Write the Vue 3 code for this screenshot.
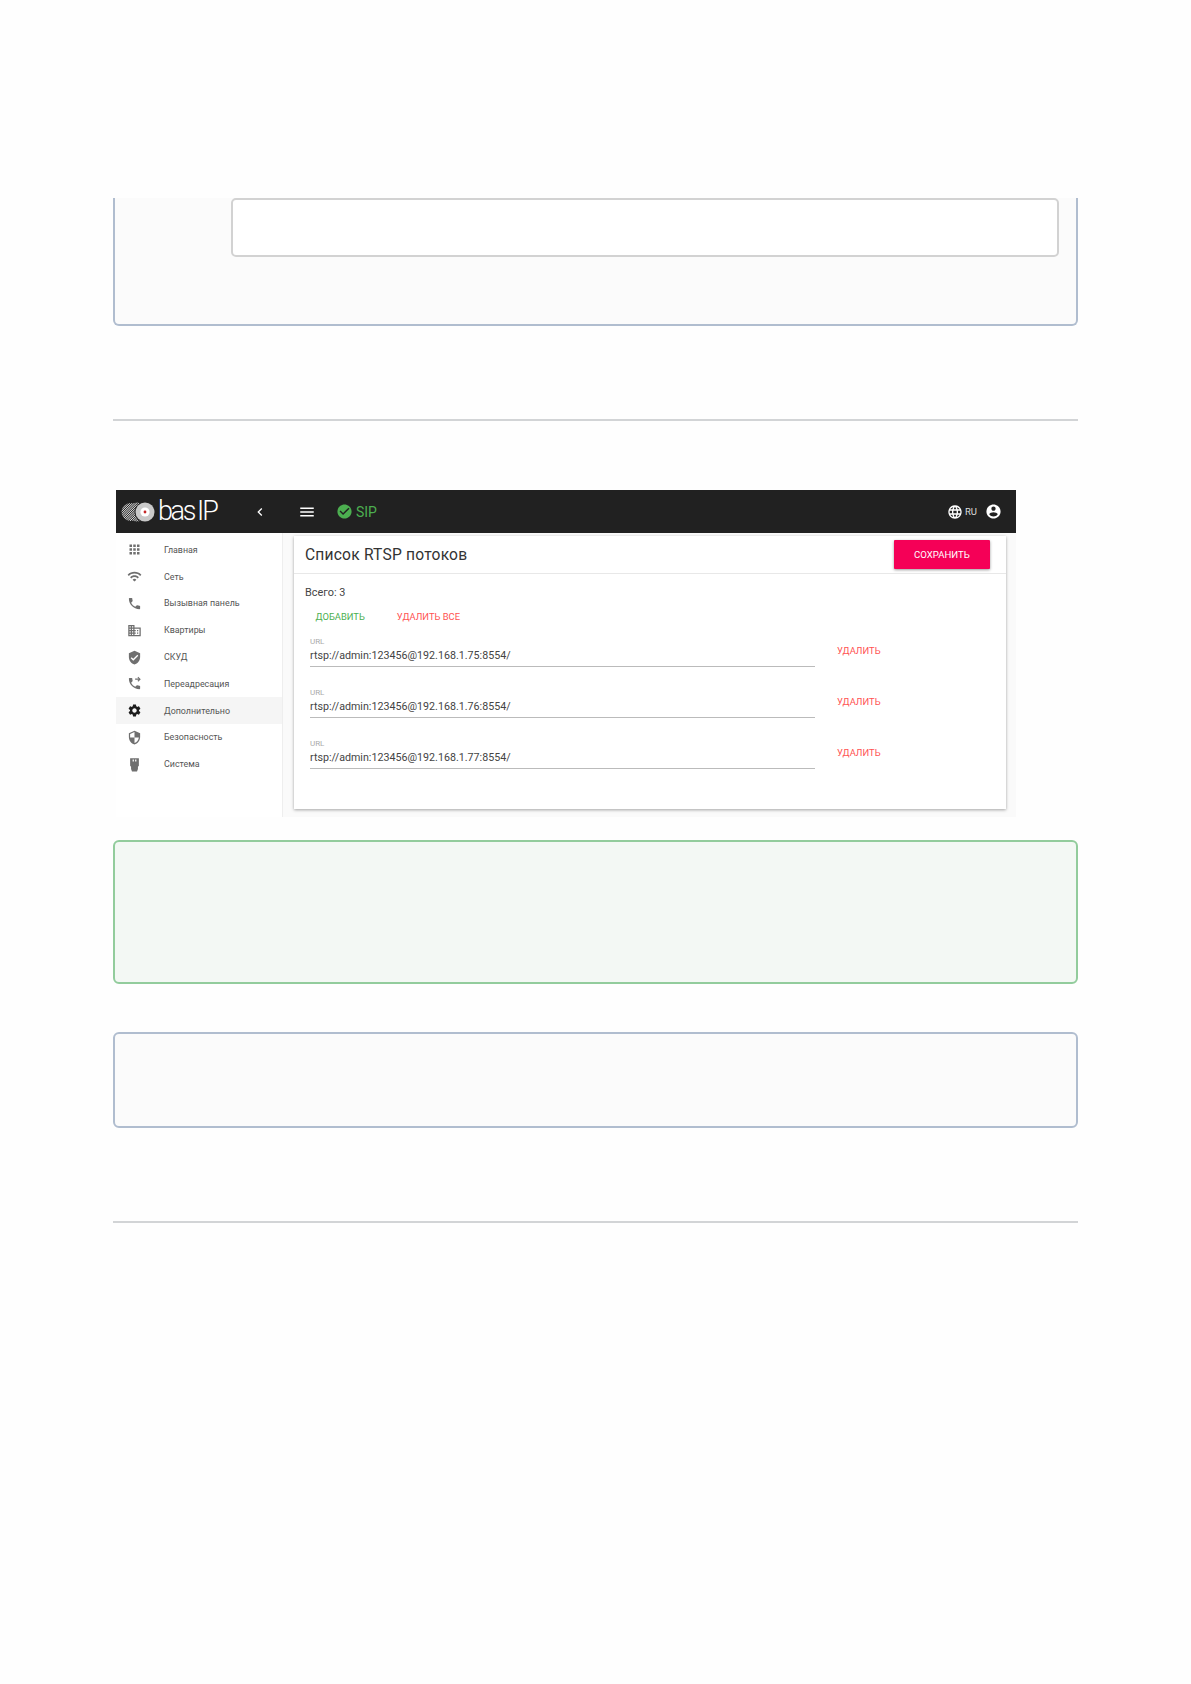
<script setup>
const navItems = [
  { label: 'Главная', icon: 'apps' },
  { label: 'Сеть', icon: 'wifi' },
  { label: 'Вызывная панель', icon: 'phone' },
  { label: 'Квартиры', icon: 'domain' },
  { label: 'СКУД', icon: 'check' },
  { label: 'Переадресация', icon: 'forward' },
  { label: 'Дополнительно', icon: 'gear', active: true },
  { label: 'Безопасность', icon: 'shield' },
  { label: 'Система', icon: 'plug' }
]
const icons = {
  apps: 'M4 8h4V4H4v4zm6 12h4v-4h-4v4zm-6 0h4v-4H4v4zm0-6h4v-4H4v4zm6 0h4v-4h-4v4zm6-10v4h4V4h-4zm-6 4h4V4h-4v4zm6 6h4v-4h-4v4zm0 6h4v-4h-4v4z',
  wifi: 'M1 9l2 2c4.97-4.97 13.03-4.97 18 0l2-2C16.93 2.93 7.08 2.93 1 9zm8 8l3 3 3-3c-1.65-1.66-4.34-1.66-6 0zm-4-4l2 2c2.76-2.76 7.24-2.76 10 0l2-2C15.14 9.14 8.87 9.14 5 13z',
  phone: 'M6.62 10.79c1.44 2.83 3.76 5.14 6.59 6.59l2.2-2.2c.27-.27.67-.36 1.02-.24 1.12.37 2.33.57 3.57.57.55 0 1 .45 1 1V20c0 .55-.45 1-1 1-9.39 0-17-7.61-17-17 0-.55.45-1 1-1h3.5c.55 0 1 .45 1 1 0 1.25.2 2.45.57 3.57.11.35.03.74-.25 1.02l-2.2 2.2z',
  domain: 'M12 7V3H2v18h20V7H12zM6 19H4v-2h2v2zm0-4H4v-2h2v2zm0-4H4V9h2v2zm0-4H4V5h2v2zm4 12H8v-2h2v2zm0-4H8v-2h2v2zm0-4H8V9h2v2zm0-4H8V5h2v2zm10 12h-8v-2h2v-2h-2v-2h2v-2h-2V9h8v10zm-2-8h-2v2h2v-2zm0 4h-2v2h2v-2z',
  check: 'M12 1L3 5v6c0 5.55 3.84 10.74 9 12 5.16-1.26 9-6.45 9-12V5l-9-4zm-2 16l-4-4 1.41-1.41L10 14.17l6.59-6.59L18 9l-8 8z',
  forward: 'M6.62 10.79c1.44 2.83 3.76 5.14 6.59 6.59l2.2-2.2c.27-.27.67-.36 1.02-.24 1.12.37 2.33.57 3.57.57.55 0 1 .45 1 1V20c0 .55-.45 1-1 1-9.39 0-17-7.61-17-17 0-.55.45-1 1-1h3.5c.55 0 1 .45 1 1 0 1.25.2 2.45.57 3.57.11.35.03.74-.25 1.02l-2.2 2.2zM18 1l-1.2 1.2 1.9 1.9H13v1.7h5.7l-1.9 1.9L18 9l4-4z',
  gear: 'M19.14 12.94c.04-.3.06-.61.06-.94 0-.32-.02-.64-.07-.94l2.03-1.58c.18-.14.23-.41.12-.61l-1.92-3.32c-.12-.22-.37-.29-.59-.22l-2.39.96c-.5-.38-1.03-.7-1.62-.94l-.36-2.54c-.04-.24-.24-.41-.48-.41h-3.84c-.24 0-.43.17-.47.41l-.36 2.54c-.59.24-1.13.57-1.62.94l-2.39-.96c-.22-.08-.47 0-.59.22L2.74 8.87c-.12.21-.08.47.12.61l2.03 1.58c-.05.3-.09.63-.09.94s.02.64.07.94l-2.03 1.58c-.18.14-.23.41-.12.61l1.92 3.32c.12.22.37.29.59.22l2.39-.96c.5.38 1.03.7 1.62.94l.36 2.54c.05.24.24.41.48.41h3.84c.24 0 .44-.17.47-.41l.36-2.54c.59-.24 1.13-.56 1.62-.94l2.39.96c.22.08.47 0 .59-.22l1.92-3.32c.12-.22.07-.47-.12-.61l-2.01-1.58zM12 15.6c-1.98 0-3.6-1.62-3.6-3.6s1.62-3.6 3.6-3.6 3.6 1.62 3.6 3.6-1.62 3.6-3.6 3.6z',
  shield: 'M12 1L3 5v6c0 5.55 3.84 10.74 9 12 5.16-1.26 9-6.45 9-12V5l-9-4zm0 10.99h7c-.53 4.12-3.28 7.79-7 8.94V12H5V6.3l7-3.11v8.8z',
  plug: 'M5 2h14v12l-1.5 1.5V19L16 23H8l-1.5-4v-3.500L5 14V2zm4 2v3h2V4H9zm4 0v3h2V4h-2z'
}
const streams = ['192.168.1.75', '192.168.1.76', '192.168.1.77']
</script>

<template>
  <div class="page">
    <section class="note note-top">
      <div class="blank-field"></div>
    </section>
    <hr class="rule rule-first" />

    <div class="shot">
      <header class="topbar">
        <div class="brand">
          <svg class="brand-mark" viewBox="0 0 36 24" width="36" height="24">
            <defs>
              <pattern id="hatch" width="1.6" height="1.6" patternUnits="userSpaceOnUse" patternTransform="rotate(45)">
                <rect width="1.6" height="1.6" fill="#222" />
                <rect width="0.8" height="1.6" fill="#ddd" />
              </pattern>
            </defs>
            <circle cx="9.5" cy="12" r="9" fill="url(#hatch)" />
            <circle cx="16" cy="12" r="9.5" fill="url(#hatch)" />
            <circle cx="24" cy="12" r="10.500" fill="#222" />
            <circle cx="24" cy="12" r="9.500" fill="#c9c9c9" />
            <circle cx="24" cy="12" r="4.600" fill="#fff" />
            <circle cx="24" cy="12" r="1.400" fill="#c62828" />
          </svg>
          <span class="brand-name">bas<span class="brand-ip">IP</span></span>
        </div>
        <svg class="chev" viewBox="0 0 24 24" width="16" height="16"><path d="M15.41 7.41L14 6l-6 6 6 6 1.41-1.41L10.83 12z" fill="#fff" /></svg>
        <svg class="burger" viewBox="0 0 24 24" width="18" height="18"><path d="M3 18h18v-2H3v2zm0-5h18v-2H3v2zm0-7v2h18V6H3z" fill="#fff" /></svg>
        <svg class="sip-icon" viewBox="0 0 24 24" width="17" height="17"><path d="M12 2C6.48 2 2 6.48 2 12s4.48 10 10 10 10-4.48 10-10S17.52 2 12 2zm-2 15l-5-5 1.41-1.41L10 14.17l7.59-7.59L19 8l-9 9z" fill="#4caf50" /></svg>
        <span class="sip">SIP</span>
        <div class="top-right">
          <svg viewBox="0 0 24 24" width="16" height="16"><path d="M11.99 2C6.47 2 2 6.48 2 12s4.47 10 9.99 10C17.52 22 22 17.52 22 12S17.52 2 11.99 2zm6.93 6h-2.95c-.32-1.25-.78-2.45-1.38-3.56 1.84.63 3.37 1.91 4.33 3.56zM12 4.04c.83 1.2 1.48 2.53 1.91 3.96h-3.82c.43-1.43 1.08-2.76 1.91-3.96zM4.26 14C4.1 13.36 4 12.69 4 12s.1-1.36.26-2h3.38c-.08.66-.14 1.32-.14 2s.06 1.34.14 2H4.26zm.82 2h2.95c.32 1.25.78 2.45 1.38 3.56-1.84-.63-3.37-1.9-4.33-3.56zm2.95-8H5.08c.96-1.66 2.49-2.93 4.33-3.56C8.81 5.55 8.35 6.75 8.03 8zM12 19.96c-.83-1.2-1.48-2.53-1.91-3.96h3.82c-.43 1.43-1.08 2.76-1.91 3.96zM14.34 14H9.66c-.09-.66-.16-1.32-.16-2s.07-1.35.16-2h4.68c.09.65.16 1.32.16 2s-.07 1.34-.16 2zm.25 5.56c.6-1.11 1.06-2.31 1.38-3.56h2.95c-.96 1.65-2.49 2.93-4.33 3.56zM16.36 14c.08-.66.14-1.32.14-2s-.06-1.34-.14-2h3.38c.16.64.26 1.31.26 2s-.1 1.36-.26 2h-3.38z" fill="#fff" /></svg>
          <span class="lang">RU</span>
          <svg class="account" viewBox="0 0 24 24" width="17" height="17"><path d="M12 2C6.48 2 2 6.48 2 12s4.48 10 10 10 10-4.48 10-10S17.52 2 12 2zm0 3c1.66 0 3 1.34 3 3s-1.34 3-3 3-3-1.34-3-3 1.34-3 3-3zm0 14.2c-2.5 0-4.71-1.28-6-3.22.03-1.99 4-3.08 6-3.08 1.99 0 5.97 1.09 6 3.08-1.29 1.94-3.5 3.22-6 3.22z" fill="#fff" /></svg>
        </div>
      </header>

      <div class="shot-body">
        <nav class="side">
          <div v-for="item in navItems" :key="item.label" class="nav-row" :class="{ active: item.active }">
            <svg viewBox="0 0 24 24" width="15" height="15"><path :d="icons[item.icon]" /></svg>
            <span>{{ item.label }}</span>
          </div>
        </nav>
        <main class="main">
          <div class="card">
            <div class="card-head">
              <h1>Список RTSP потоков</h1>
              <button class="save">СОХРАНИТЬ</button>
            </div>
            <div class="card-body">
              <p class="total">Всего: 3</p>
              <div class="actions">
                <span class="add">ДОБАВИТЬ</span>
                <span class="del">УДАЛИТЬ ВСЕ</span>
              </div>
              <div v-for="ip in streams" :key="ip" class="stream">
                <div class="field">
                  <label>URL</label>
                  <div class="value">rtsp://admin:123456@{{ ip }}:8554/</div>
                </div>
                <span class="del">УДАЛИТЬ</span>
              </div>
            </div>
          </div>
        </main>
      </div>
    </div>

    <section class="note note-green"></section>
    <section class="note note-plain"></section>
    <hr class="rule rule-last" />
  </div>
</template>

<style>
html, body { margin: 0; background: #fefefe; }
</style>

<style scoped>
.page {
  height: 1684px;
  box-sizing: border-box;
  padding: 198px 113px 0 113px;
  font-family: Roboto, "Liberation Sans", sans-serif;
  color: #333;
}
.note {
  box-sizing: border-box;
  border: 2px solid #b0bdcf;
  border-radius: 6px;
  background: #fbfbfb;
}
.note-top {
  height: 128px;
  border-top: 0;
  border-radius: 0 0 6px 6px;
  padding: 0 17px 0 116px;
}
.blank-field {
  box-sizing: border-box;
  height: 59px;
  background: #fff;
  border: 2px solid #d2d2d2;
  border-radius: 5px;
}
.rule {
  margin: 0;
  border: 0;
  height: 2px;
  background: #d2d4d6;
}
.rule-first { margin-top: 93px; }
.shot {
  margin: 69px 0 0 3px;
  width: 900px;
}
.topbar {
  height: 43px;
  background: #212121;
  display: flex;
  align-items: center;
  color: #fff;
}
.brand {
  display: flex;
  align-items: center;
  width: 136px;
  padding-left: 5px;
  box-sizing: border-box;
}
.brand-name {
  font-size: 27px;
  font-weight: 300;
  letter-spacing: -2.400px;
  margin-left: 1px;
  line-height: 1;
}
.brand-ip { margin-left: 3px; letter-spacing: -2px; }
.burger { margin-left: 30px; }
.sip-icon { margin-left: 20px; }
.sip { margin-left: 3px; font-size: 14px; color: #4caf50; }
.top-right {
  margin-left: auto;
  display: flex;
  align-items: center;
  padding-right: 14px;
}
.lang { font-size: 9.500px; margin-left: 2px; color: #ddd; }
.account { margin-left: 8px; }
.shot-body {
  display: flex;
  height: 284px;
  background: #fafafa;
}
.side {
  width: 167px;
  flex: none;
  background: #fff;
  box-sizing: border-box;
  padding-top: 3.500px;
  border-right: 1px solid #eee;
}
.nav-row {
  height: 26.800px;
  display: flex;
  align-items: center;
  font-size: 8.900px;
  color: #555;
  padding-left: 11px;
}
.nav-row svg { fill: #6f6f6f; margin-right: 22px; flex: none; }
.nav-row.active { background: #f5f5f5; }
.nav-row.active svg { fill: #1c1c1c; }
.main { flex: 1; padding: 3px 10px 8px 11px; }
.card {
  background: #fff;
  height: 273px;
  box-shadow: 0 1px 3px rgba(0,0,0,.35);
}
.card-head {
  height: 37px;
  border-bottom: 1px solid #e8e8e8;
  display: flex;
  align-items: center;
  justify-content: space-between;
  padding: 0 16px 0 11px;
}
.card-head h1 {
  margin: 0;
  font-size: 15.600px;
  font-weight: 400;
  letter-spacing: .2px;
  color: #333;
}
.save {
  width: 96px;
  height: 29px;
  border: 0;
  border-radius: 1px;
  background: #f50057;
  color: #fff;
  font: 400 9.600px Roboto, sans-serif;
  box-shadow: 0 1px 3px rgba(0,0,0,.4);
  padding: 0;
}
.card-body { padding: 12px 0 0 11px; }
.total { margin: 0; font-size: 10.900px; line-height: 14px; color: #444; }
.actions {
  display: flex;
  gap: 32px;
  margin-top: 10px;
  padding-left: 10.500px;
  font-size: 9.400px;
  line-height: 14px;
}
.add { color: #4caf50; }
.del { color: #ff5252; font-size: 9.400px; }
.stream {
  display: flex;
  align-items: flex-start;
  gap: 22px;
  padding: 4px 0 0 5px;
  box-sizing: border-box;
  margin-top: 9px;
  height: 42px;
}
.field {
  width: 505px;
  height: 29px;
  border-bottom: 1px solid #bbb;
  flex: none;
}
.stream .del { margin-top: 7.500px; }
.field label { display: block; font-size: 8px; line-height: 10px; color: #aaa; }
.value { font-size: 10.700px; line-height: 16px; color: #444; margin-top: 1px; }
.note-green {
  margin-top: 23px;
  height: 144px;
  background: #f3f8f4;
  border-color: #92cc9c;
}
.note-plain {
  margin-top: 48px;
  height: 96px;
}
.rule-last { margin-top: 93px; }
</style>
